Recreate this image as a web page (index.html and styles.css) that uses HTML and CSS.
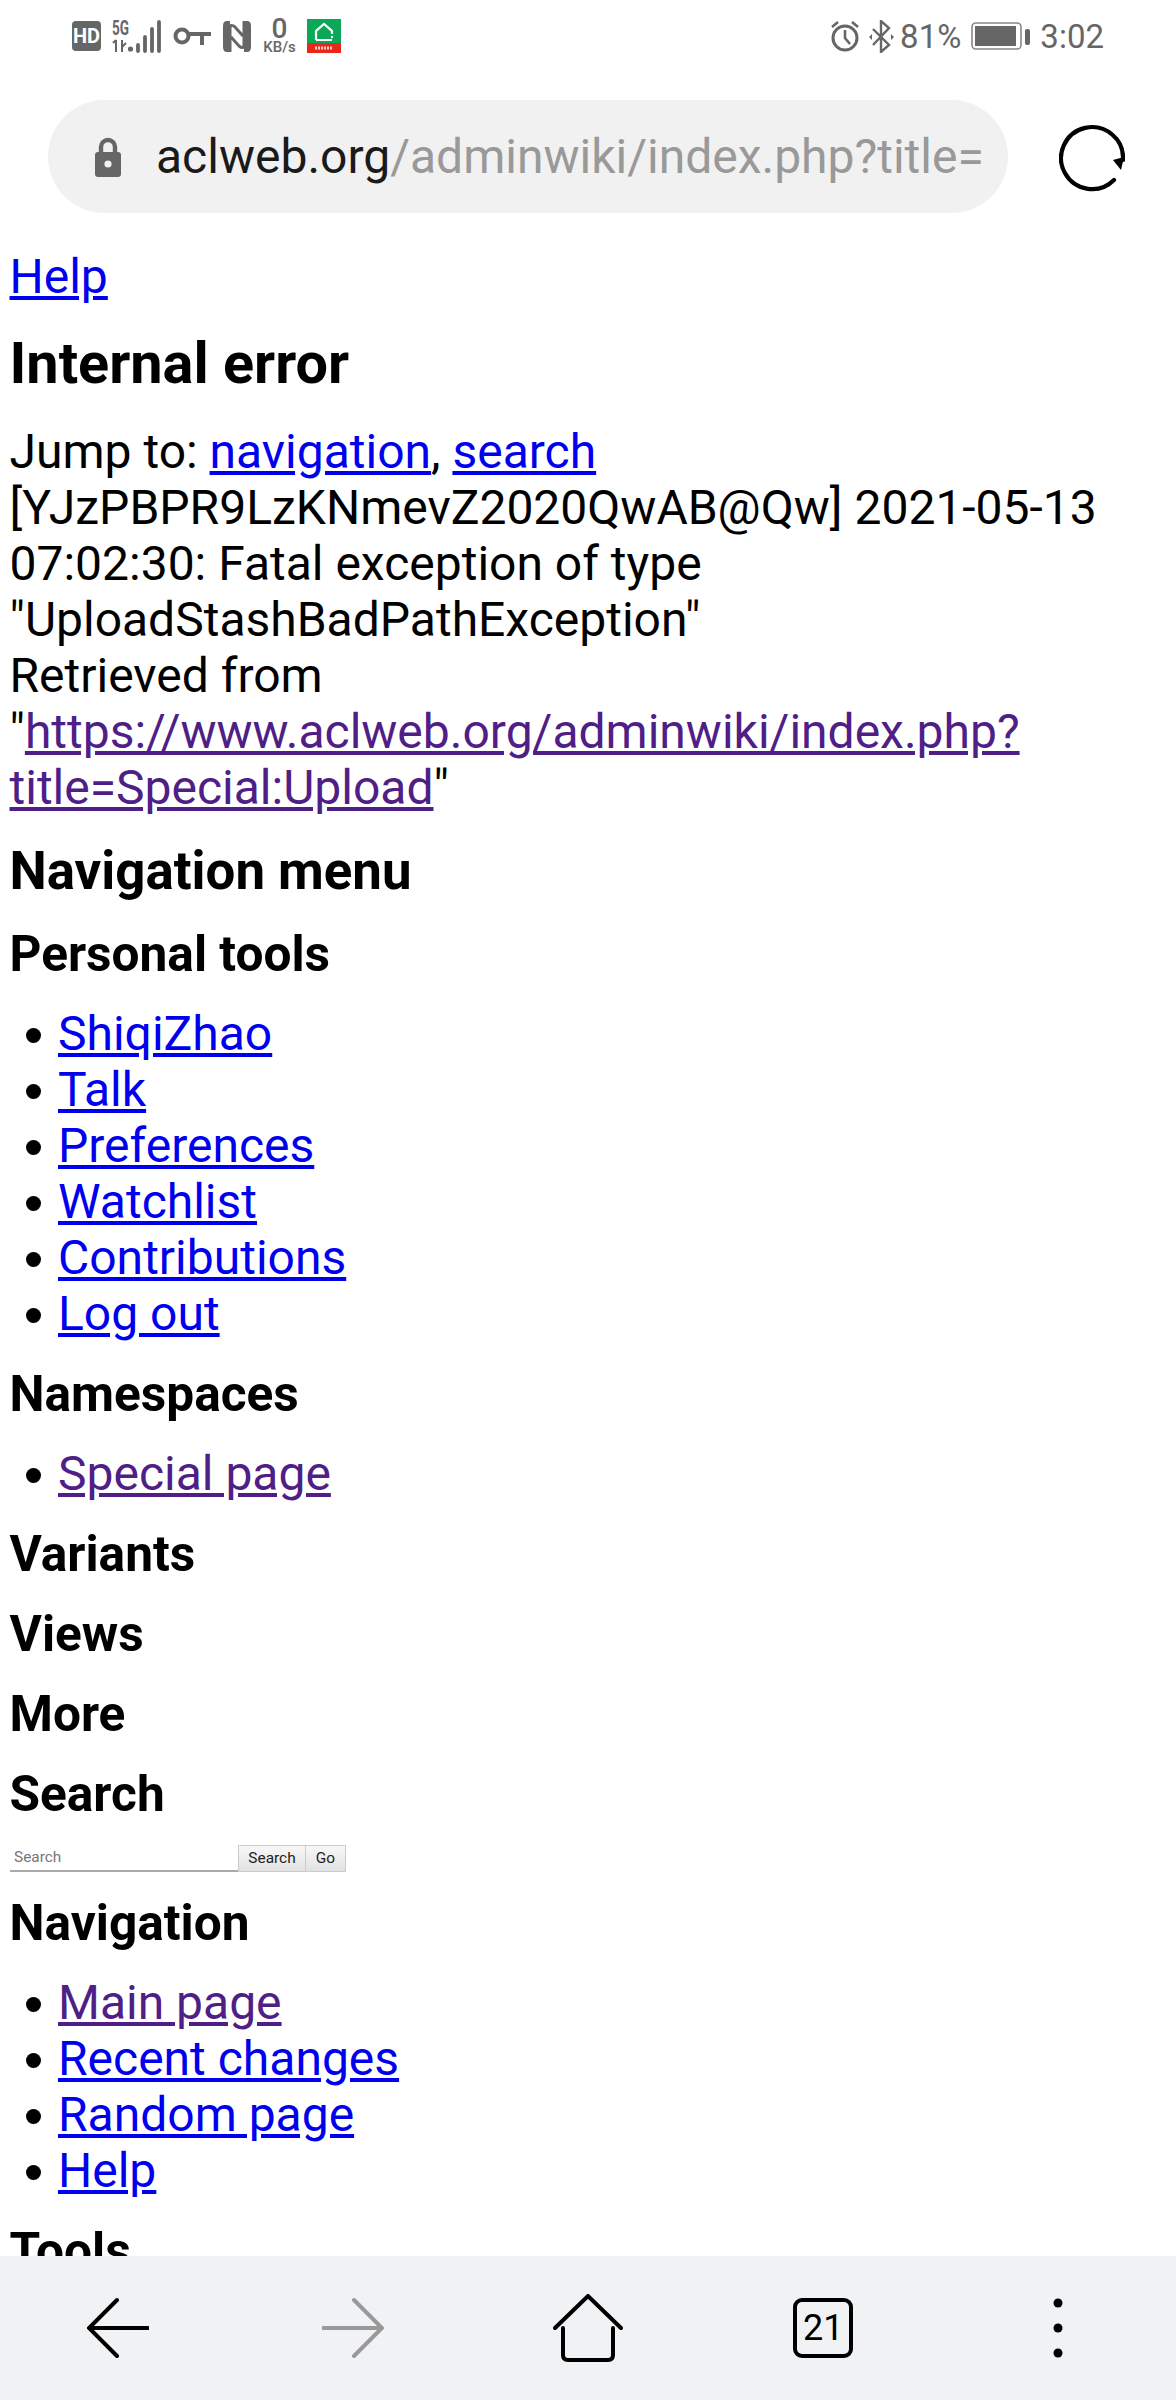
FILE: index.html
```html
<!DOCTYPE html>
<html lang="en">
<head>
<meta charset="utf-8">
<title>Internal error</title>
<link rel="stylesheet" href="styles.css">
</head>
<body>
<div class="phone">
  <header class="status">
    <div class="status-left">
      <svg class="ic" width="29" height="30" viewBox="0 0 29 30"><rect width="29" height="30" rx="4" fill="#666"/><text x="14.5" y="21.5" class="hd">HD</text></svg>
      <svg class="ic" width="50" height="33" viewBox="0 0 50 33"><text x="0" y="15" class="g5" textLength="17" lengthAdjust="spacingAndGlyphs">5G</text><path d="M4 20v12M1 23l3-3M10 20v12M10 27l4-4" stroke="#666" stroke-width="2" fill="none"/><circle cx="18.5" cy="29" r="2.6" fill="#666"/><path d="M26 25v6M33 17v14M40 9v22M47 2v29" stroke="#666" stroke-width="3.8" stroke-linecap="round"/></svg>
      <svg class="ic" width="38" height="18" viewBox="0 0 38 18"><circle cx="9" cy="9" r="6.5" fill="none" stroke="#666" stroke-width="4"/><path d="M15 7h23M29 7v11" stroke="#666" stroke-width="4" fill="none"/></svg>
      <svg class="ic" width="30" height="33" viewBox="0 0 30 33"><path d="M8 1H5Q1 1 1 6v21q0 5 4 5h3zM22 1h3q4 0 4 5v21q0 5-4 5h-3z" fill="#666"/><path d="M8 32V9q0-6 5-2l8 9M22 1v23q0 6-5 2l-8-9" stroke="#666" stroke-width="3" fill="none"/></svg>
      <div class="speed"><span class="speed-n">0</span><span class="speed-u">KB/s</span></div>
      <svg class="ic" width="34" height="34" viewBox="0 0 34 34"><rect width="34" height="34" fill="#0aa858"/><rect y="24" width="34" height="10" fill="#e8281a"/><path d="M9 21V12l8-7 8 7v3M9 21h16" stroke="#fff" stroke-width="2.2" fill="none"/><circle cx="25" cy="18" r="1.2" fill="#fff"/><path d="M8 29h18" stroke="#fcc" stroke-width="3" stroke-dasharray="2 1"/></svg>
    </div>
    <div class="status-right">
      <svg class="alarm" width="30" height="32" viewBox="0 0 30 32"><circle cx="15" cy="18" r="12" fill="none" stroke="#666" stroke-width="3"/><path d="M15 10v8l5 6M2 7l6-5M28 7l-6-5" stroke="#666" stroke-width="2.6" fill="none"/></svg>
      <svg class="bt" width="25" height="33" viewBox="0 0 25 33"><path d="M4 9l16 16-8 7V1l8 7L4 25" stroke="#666" stroke-width="2.4" fill="none"/><path d="M0 17l3-3v6zM25 17l-3-3v6z" fill="#666"/></svg>
      <span class="pct">81%</span>
      <svg class="batt" width="59" height="28" viewBox="0 0 59 28"><rect x="1" y="1" width="49" height="26" rx="4" fill="none" stroke="#888" stroke-width="1.6"/><rect x="4" y="4" width="41" height="20" fill="#666"/><rect x="54" y="7" width="5" height="16" rx="2" fill="#666"/></svg>
      <span class="time">3:02</span>
    </div>
  </header>
  <div class="urlbar">
    <div class="urlpill">
      <svg class="lock" width="28" height="40" viewBox="0 0 28 40"><path d="M7 17V10a7 7 0 0 1 14 0v7" fill="none" stroke="#666" stroke-width="4.4"/><rect x="1" y="15" width="26" height="25" rx="3" fill="#666"/><circle cx="14" cy="27" r="3.6" fill="#f1f1f1"/></svg>
      <span class="url"><span class="host">aclweb.org</span>/adminwiki/index.php?title=</span>
    </div>
    <svg class="reload" width="66" height="68" viewBox="0 0 66 68"><path d="M55 56A31 31 0 1 1 64 36" fill="none" stroke="#000" stroke-width="4.2" stroke-linecap="round"/><path d="M54 36l11-3-3 13z" fill="#000"/></svg>
  </div>
  <main class="content">
    <a href="#" class="lnk">Help</a>
    <h1>Internal error</h1>
    <div>Jump to: <a href="#" class="lnk">navigation</a>, <a href="#" class="lnk">search</a></div>
    <div>[YJzPBPR9LzKNmevZ2020QwAB@Qw] 2021-05-13 07:02:30: Fatal exception of type "UploadStashBadPathException"</div>
    <div>Retrieved from "<a href="#" class="vis">https://www.aclweb.org/adminwiki/index.php?title=Special:Upload</a>"</div>
    <h2>Navigation menu</h2>
    <h3>Personal tools</h3>
    <ul>
      <li><a href="#" class="lnk">ShiqiZhao</a></li>
      <li><a href="#" class="lnk">Talk</a></li>
      <li><a href="#" class="lnk">Preferences</a></li>
      <li><a href="#" class="lnk">Watchlist</a></li>
      <li><a href="#" class="lnk">Contributions</a></li>
      <li><a href="#" class="lnk">Log out</a></li>
    </ul>
    <h3>Namespaces</h3>
    <ul><li><a href="#" class="vis">Special page</a></li></ul>
    <h3>Variants</h3>
    <h3>Views</h3>
    <h3>More</h3>
    <h3>Search</h3>
    <form class="search">
      <span class="search-input">Search</span><span class="btn">Search</span><span class="btn">Go</span>
    </form>
    <h3>Navigation</h3>
    <ul>
      <li><a href="#" class="vis">Main page</a></li>
      <li><a href="#" class="lnk">Recent changes</a></li>
      <li><a href="#" class="lnk">Random page</a></li>
      <li><a href="#" class="lnk">Help</a></li>
    </ul>
    <h3>Tools</h3>
  </main>
  <nav class="bottom">
    <svg width="62" height="62" viewBox="0 0 62 62"><path d="M30 3L2 31l28 28M3 31h58" fill="none" stroke="#000" stroke-width="4" stroke-linecap="round"/></svg>
    <svg width="62" height="62" viewBox="0 0 62 62"><path d="M32 3l28 28-28 28M1 31h58" fill="none" stroke="#999" stroke-width="4" stroke-linecap="round"/></svg>
    <svg width="70" height="68" viewBox="0 0 70 68"><path d="M2 34L35 2l33 32M10 34v27q0 5 5 5h40q5 0 5-5V34" fill="none" stroke="#000" stroke-width="4" stroke-linecap="round"/></svg>
    <div class="tabs">21</div>
    <svg width="10" height="62" viewBox="0 0 10 62"><circle cx="5" cy="6" r="4.5"/><circle cx="5" cy="31" r="4.5"/><circle cx="5" cy="56" r="4.5"/></svg>
  </nav>
</div>
</body>
</html>
```

FILE: styles.css
```css
* { box-sizing: border-box; }
html, body { margin: 0; padding: 0; }
body { background: #fff; font-family: Roboto, "Liberation Sans", sans-serif; color: #000; }
.phone { width: 1176px; height: 2400px; overflow: hidden; display: flex; flex-direction: column; }
.status { height: 72px; flex: none; display: flex; justify-content: space-between; align-items: center; padding: 0 72px; color: #666; }
.status-left, .status-right { display: flex; align-items: center; }
.status-left { gap: 11px; }
.hd { font: 700 20px Roboto, sans-serif; fill: #fff; text-anchor: middle; }
.g5 { font: 700 20px Roboto, sans-serif; fill: #666; }
.speed { display: flex; flex-direction: column; align-items: center; width: 33px; line-height: 1; }
.speed-n { font-size: 28px; font-weight: 500; height: 23px; line-height: 23px; }
.speed-u { font-size: 15px; font-weight: 500; }
.alarm { margin-right: 9px; }
.bt { margin-right: 6px; }
.pct, .time { font-size: 33px; }
.batt { margin: 0 10px; }
.urlbar { flex: none; height: 141px; padding: 28px 51px 0 48px; display: flex; justify-content: space-between; align-items: flex-start; }
.urlpill { width: 960px; height: 113px; border-radius: 57px; background: #f1f1f1; display: flex; align-items: center; padding: 0 24px 0 46px; overflow: hidden; white-space: nowrap; }
.lock { flex: none; margin-right: 34px; }
.url { font-size: 48px; color: #999; overflow: hidden; }
.host { color: #1a1a1a; }
.reload { margin-top: 24px; }
.content { flex: 1; min-height: 0; overflow: hidden; padding: 36px 9.5px 0; font-size: 48px; line-height: 56px; }
.lnk { color: #0000ee; }
.vis { color: #501e87; }
h1, h2, h3 { margin: 0; font-weight: 700; line-height: 56px; }
h1 { font-size: 57.6px; margin: 31px 0 32px; }
h2 { font-size: 52.8px; margin: 27px 0; }
h3 { font-size: 49.6px; margin: 24px 0; }
ul { margin: 0; padding: 0 0 0 48.5px; list-style: none; }
li { line-height: 56px; position: relative; }
li::before { content: ""; position: absolute; left: -32px; top: 22px; width: 15px; height: 15px; border-radius: 50%; background: #000; }
.search { display: flex; height: 27px; align-items: stretch; font-size: 15.4px; line-height: 25px; margin: -1px 0 -1px 0.5px; }
.search-input { width: 228px; color: #777; border-bottom: 2px solid #aaa; padding: 0 4px; }
.btn { background: linear-gradient(#f8f8f8, #e2e2e2); border: 1px solid #ccc; color: #222; text-align: center; }
.btn:nth-child(2) { width: 68px; }
.btn:nth-child(3) { width: 40px; border-left: 0; }
.bottom { flex: none; height: 144px; background: #f1f2f4; display: grid; grid-template-columns: repeat(5, 1fr); align-items: center; justify-items: center; }
.tabs { width: 60px; height: 60px; border: 4px solid #000; border-radius: 9px; font-size: 36px; text-align: center; line-height: 52px; }
```
